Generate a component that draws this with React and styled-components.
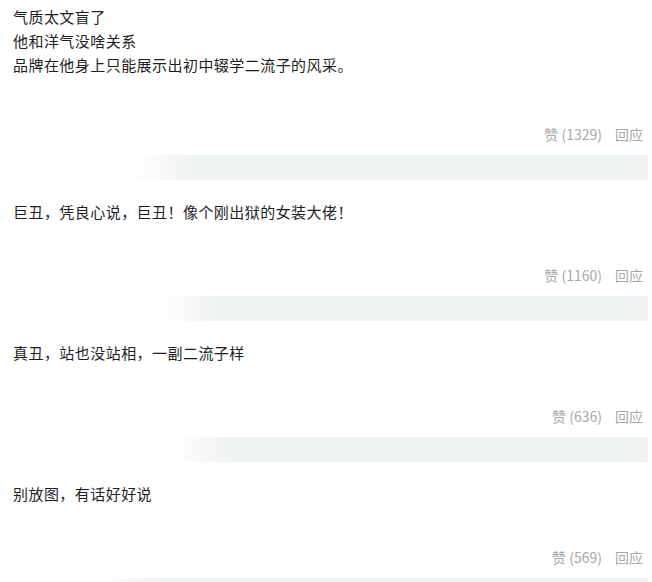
import React from 'react';
import styled, { createGlobalStyle } from 'styled-components';

const GlobalStyle = createGlobalStyle`
  html, body {
    margin: 0;
    padding: 0;
    background: #fff;
  }
  body {
    font-family: "Noto Sans CJK SC", "Noto Sans", sans-serif;
  }
`;

const comments = [
  {
    lines: ['气质太文盲了', '他和洋气没啥关系', '品牌在他身上只能展示出初中辍学二流子的风采。'],
    votes: 1329,
    top: 5,
    gap: 47,
    fade: 185,
  },
  { lines: ['巨丑，凭良心说，巨丑！像个刚出狱的女装大佬！'], votes: 1160, top: 20, gap: 41, fade: 210 },
  { lines: ['真丑，站也没站相，一副二流子样'], votes: 636, top: 20, gap: 41, fade: 222 },
  { lines: ['别放图，有话好好说'], votes: 569, top: 20, gap: 41, fade: 150 },
];

const App = () => (
  <>
    <GlobalStyle />
    <List>
      {comments.map((c) => (
        <Comment key={c.votes} $top={c.top}>
          <Body>
            {c.lines.map((l) => (
              <Line key={l}>{l}</Line>
            ))}
          </Body>
          <Actions $gap={c.gap}>
            <Vote>赞 ({c.votes})</Vote>
            <Reply>回应</Reply>
          </Actions>
          <Divider $fade={c.fade} />
        </Comment>
      ))}
    </List>
  </>
);

export default App;

const List = styled.div`
  width: 652px;
  height: 582px;
  overflow: hidden;
`;

const Comment = styled.div`
  padding-top: ${(p) => p.$top}px;
`;

const Body = styled.div`
  padding-left: 13px;
  font-size: 15px;
  letter-spacing: 0.45px;
  line-height: 24px;
  color: #1e1e1e;
`;

const Line = styled.div``;

const Actions = styled.div`
  margin-top: ${(p) => p.$gap}px;
  margin-bottom: 11px;
  padding-right: 9px;
  display: flex;
  justify-content: flex-end;
  align-items: center;
  height: 20px;
  font-size: 14px;
  color: #a8a8a8;
`;

const Vote = styled.span``;

const Reply = styled.span`
  margin-left: 13px;
`;

const Divider = styled.div`
  height: 25px;
  margin: 0 4px 0 10px;
  background: linear-gradient(
    to right,
    #fdfefe 0,
    #fcfdfd ${(p) => p.$fade - 50}px,
    #eff3f2 ${(p) => p.$fade}px,
    #eff3f2 100%
  );
`;
